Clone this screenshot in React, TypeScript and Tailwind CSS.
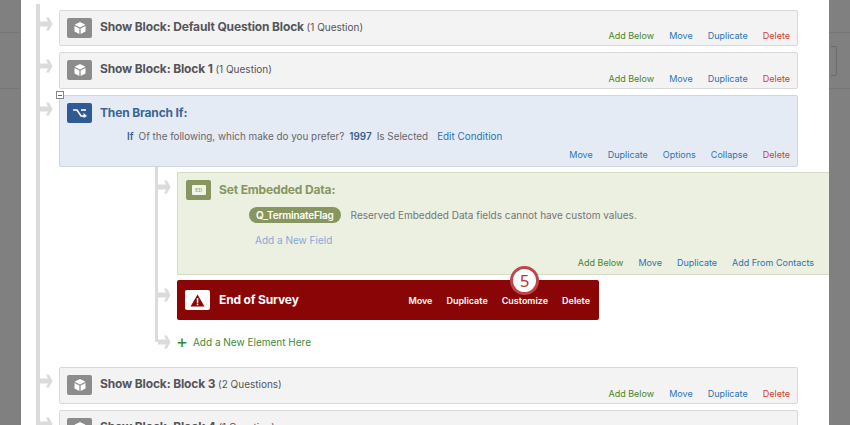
const font = { fontFamily: 'Inter, "Liberation Sans", sans-serif' };

function Cube() {
  return (
    <svg width="14" height="14" viewBox="0 0 14 14">
      <path d="M7 1 L12.5 3.8 L7 6.5 L1.5 3.8 Z" fill="#fff" />
      <path d="M1.5 5 L6.4 7.5 L6.4 13 L1.5 10.4 Z" fill="#fff" />
      <path d="M12.5 5 L7.6 7.5 L7.6 13 L12.5 10.4 Z" fill="#fff" />
    </svg>
  );
}

function Arrow({ className }: { className?: string }) {
  return (
    <svg width="19" height="14" viewBox="0 0 19 14" className={className}>
      <path d="M0 4.5 H8 L6 0.5 H9 L12.5 7 L9 13.5 H6 L8 9.5 H0 Z" fill="#dbdbdb" />
    </svg>
  );
}

function Actions({ items }: { items: [string, string][] }) {
  return (
    <div className="ml-auto flex gap-[15px] self-end text-[9px] leading-[14px]">
      {items.map(([label, color]) => (
        <span key={label} className={color}>
          {label}
        </span>
      ))}
    </div>
  );
}

const green = 'text-[#47862a]';
const blue = 'text-[#2f72b3]';
const red = 'text-[#cf4228]';

function ShowBlock({ name, count, h }: { name: string; count: string; h: string }) {
  return (
    <div className="flex">
      <Arrow className="mt-[7px] shrink-0" />
      <div className={`flex flex-1 items-start rounded-[2px] border border-[#d9d9d9] bg-[#f3f3f3] pt-[7px] pr-[7px] pb-[2px] pl-[7px] ${h}`}>
        <div className="flex h-[20px] w-[25px] shrink-0 items-center justify-center rounded-[2px] bg-[#8c8c8c]">
          <Cube />
        </div>
        <div className="ml-[8px] text-[12px] leading-[18px] font-bold tracking-[-0.15px] text-[#55555a]">
          {name} <span className="text-[10px] font-normal tracking-normal">{count}</span>
        </div>
        <Actions
          items={[
            ['Add Below', green],
            ['Move', blue],
            ['Duplicate', blue],
            ['Delete', red],
          ]}
        />
      </div>
    </div>
  );
}

function Gutter({ side }: { side: 'left' | 'right' }) {
  return (
    <div className="flex w-[21px] shrink-0 flex-col bg-[#808080]">
      <div className="h-[33px] border-b border-[#777]" />
      <div className="h-[56px] border-b border-[#777] pt-[13px]">
        {side === 'right' && <div className="ml-[2px] h-[30px] w-[6px] rounded-r-[2px] border border-l-0 border-[#6c6c6c]" />}
      </div>
    </div>
  );
}

export default function App() {
  return (
    <div className="flex h-[425px] w-[850px] overflow-hidden bg-white" style={font}>
      <Gutter side="left" />
      <div className="flex-1 overflow-hidden pt-[4px] pr-[31px] pl-[15px]">
        <div className="border-l-4 border-[#dbdbdb] pt-[6px]">
          <ShowBlock name="Show Block: Default Question Block" count="(1 Question)" h="h-[36px]" />
          <div className="mt-[6px]">
            <ShowBlock name="Show Block: Block 1" count="(1 Question)" h="h-[37px]" />
          </div>

          {/* Branch */}
          <div className="mt-[6px] flex">
            <Arrow className="mt-[7px] shrink-0" />
            <div className="relative flex h-[72px] flex-1 flex-col rounded-[2px] border border-[#ccd5e3] bg-[#e5ebf5] pt-[7px] pr-[7px] pb-[4px] pl-[7px]">
              <div className="absolute top-[-5px] left-[-4px] flex h-[8px] w-[8px] items-center justify-center border border-[#888] bg-white">
                <div className="h-px w-[4px] bg-[#666]" />
              </div>
              <div className="flex items-center">
                <div className="flex h-[20px] w-[25px] items-center justify-center rounded-[2px] bg-[#2f5a93]">
                  <svg width="16" height="10" viewBox="0 0 16 10" fill="none" stroke="#fff" strokeWidth="1.6">
                    <path d="M1 2 H5 L9 8 H12" />
                    <path d="M9 2 H14" />
                    <path d="M11.5 5 L15 8 L11.5 10 Z" fill="#fff" stroke="none" />
                  </svg>
                </div>
                <div className="ml-[8px] text-[12px] leading-[18px] font-bold tracking-[-0.15px] text-[#3a6596]">
                  Then Branch If:
                </div>
              </div>
              <div className="mt-[6px] ml-[60px] flex text-[9.9px] leading-[14px] text-[#66666b]">
                <span className="font-semibold text-[#3a5f8f]">If</span>
                <span className="ml-[5px]">Of the following, which make do you prefer?</span>
                <span className="ml-[5px] font-semibold text-[#3a5f8f]">1997</span>
                <span className="ml-[5px]">Is Selected</span>
                <span className={`ml-[9px] ${blue}`}>Edit Condition</span>
              </div>
              <div className="mt-auto flex">
                <Actions
                  items={[
                    ['Move', blue],
                    ['Duplicate', blue],
                    ['Options', blue],
                    ['Collapse', blue],
                    ['Delete', red],
                  ]}
                />
              </div>
            </div>
          </div>

          {/* Nested branch contents */}
          <div className="mr-[-31px] ml-[115px] h-[175px] border-l-[3px] border-[#dbdbdb] pt-[5px]">
            <div className="flex">
              <Arrow className="mt-[8px] shrink-0" />
              <div className="flex h-[103px] flex-1 flex-col rounded-l-[2px] border border-r-0 border-[#d5dcc6] bg-[#ebf0e0] pt-[7px] pr-[15px] pb-[4px] pl-[8px]">
                <div className="flex items-center">
                  <div className="flex h-[20px] w-[25px] items-center justify-center rounded-[2px] bg-[#87965f]">
                    <div className="flex h-[10px] w-[14px] items-center justify-center rounded-[1px] bg-[#f2f4ea] font-serif text-[6px] text-[#87965f]">
                      ED
                    </div>
                  </div>
                  <div className="ml-[8px] text-[12px] leading-[18px] font-bold tracking-[-0.15px] text-[#87965f]">
                    Set Embedded Data:
                  </div>
                </div>
                <div className="mt-[7px] ml-[63px] flex items-center">
                  <span className="h-[16px] rounded-full bg-[#87965f] px-[7px] text-[10px] leading-[16px] font-semibold tracking-[-0.2px] text-white">
                    Q_TerminateFlag
                  </span>
                  <span className="ml-[10px] text-[10px] text-[#75757a]">
                    Reserved Embedded Data fields cannot have custom values.
                  </span>
                </div>
                <div className="mt-[10px] ml-[69px] text-[10px] leading-[14px] text-[#8ca6dc]">Add a New Field</div>
                <div className="mt-auto flex">
                  <Actions
                    items={[
                      ['Add Below', green],
                      ['Move', blue],
                      ['Duplicate', blue],
                      ['Add From Contacts', blue],
                    ]}
                  />
                </div>
              </div>
            </div>

            <div className="mt-[5px] flex">
              <Arrow className="mt-[8px] shrink-0" />
              <div className="relative mr-[230px] flex h-[40px] flex-1 items-center rounded-[2px] bg-[#8a0606] pr-[9px] pl-[8px]">
                <div className="flex h-[20px] w-[25px] items-center justify-center rounded-[2px] bg-white">
                  <svg width="15" height="13" viewBox="0 0 15 13">
                    <path d="M7.5 0.5 L14.5 12.5 H0.5 Z" fill="#8a0606" />
                    <rect x="6.8" y="4" width="1.5" height="4.8" fill="#fff" />
                    <rect x="6.8" y="9.6" width="1.5" height="1.6" fill="#fff" />
                  </svg>
                </div>
                <div className="ml-[9px] text-[12px] font-bold tracking-[-0.15px] text-white">End of Survey</div>
                <div className="mt-[2px] ml-auto flex gap-[14px] text-[9px] font-semibold text-white">
                  <span>Move</span>
                  <span>Duplicate</span>
                  <span>Customize</span>
                  <span>Delete</span>
                </div>
                <div className="absolute top-[-14px] left-[333px] flex h-[29px] w-[29px] items-center justify-center rounded-full border-[3px] border-[#bf444b] bg-white text-[17px] leading-none text-[#b9353d]" style={{ fontFamily: '"Noto Sans", sans-serif' }}>
                  5
                </div>
              </div>
            </div>

            <div className="mt-[15px] flex items-center">
              <Arrow className="shrink-0" />
              <span className="ml-[-1px] text-[18px] leading-[14px] text-[#2f8a2c]">+</span>
              <span className="ml-[5px] text-[10px] leading-[14px] text-[#3f8a3a]">Add a New Element Here</span>
            </div>
          </div>

          <div className="mt-[25px]">
            <ShowBlock name="Show Block: Block 3" count="(2 Questions)" h="h-[37px]" />
          </div>
          <div className="mt-[6px]">
            <ShowBlock name="Show Block: Block 4" count="(1 Question)" h="h-[37px]" />
          </div>
        </div>
      </div>
      <Gutter side="right" />
    </div>
  );
}
